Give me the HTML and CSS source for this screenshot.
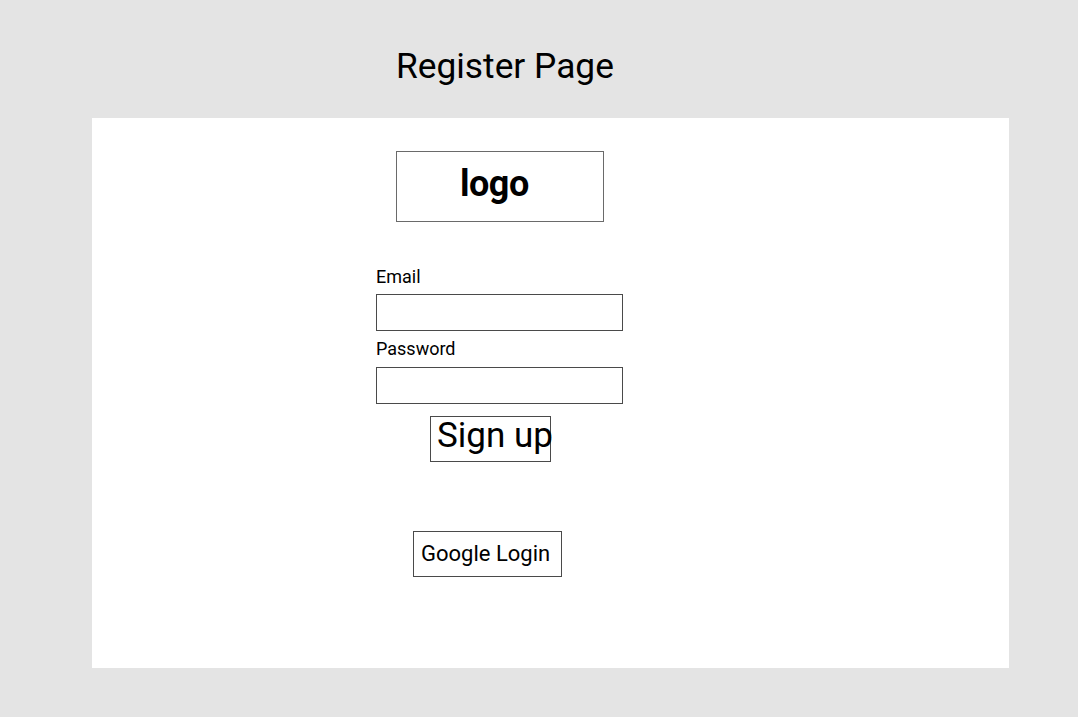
FILE: index.html
```html
<!DOCTYPE html>
<html>
<head>
<meta charset="utf-8">
<link rel="stylesheet" href="styles.css">
</head>
<body>
<div class="page">
  <h1 class="title">Register Page</h1>
  <div class="card">
    <div class="form">
      <div class="logo">logo</div>
      <label class="label label-email">Email</label>
      <div class="input"></div>
      <label class="label label-password">Password</label>
      <div class="input"></div>
      <div class="signup">Sign up</div>
      <div class="google">Google Login</div>
    </div>
  </div>
</div>
</body>
</html>
```

FILE: styles.css
```css
html, body {
  margin: 0;
  padding: 0;
}
body {
  background: #e4e4e4;
  font-family: Roboto, "Liberation Sans", sans-serif;
  color: #000;
  width: 1078px;
  height: 717px;
  overflow: hidden;
}
.page {
  display: flex;
  flex-direction: column;
}
.title {
  margin: 45px 0 0 396px;
  font-size: 35.3px;
  font-weight: 400;
  line-height: 42px;
  height: 42px;
}
.card {
  margin: 31px 0 0 92px;
  width: 917px;
  height: 550px;
  background: #fff;
  box-sizing: border-box;
  padding: 33px 0 0 284px;
}
.form {
  display: flex;
  flex-direction: column;
  align-items: flex-start;
}
.logo {
  margin-left: 20px;
  width: 208px;
  height: 71px;
  box-sizing: border-box;
  border: 1px solid #6a6a6a;
  font-size: 36px;
  font-weight: 700;
  line-height: 42px;
  padding: 11px 0 0 63px;
  letter-spacing: -0.5px;
}
.label {
  font-size: 18px;
  line-height: 21px;
}
.label-email {
  margin-top: 44px;
  margin-bottom: 7px;
}
.label-password {
  margin-top: 7px;
  margin-bottom: 8px;
}
.input {
  width: 247px;
  height: 37px;
  box-sizing: border-box;
  border: 1px solid #4a4a4a;
}
.signup {
  margin: 12px 0 0 54px;
  width: 121px;
  height: 46px;
  box-sizing: border-box;
  border: 1px solid #4a4a4a;
  font-size: 35px;
  line-height: 36px;
  padding: 1px 0 0 6px;
  white-space: nowrap;
  overflow: visible;
}
.google {
  margin: 69px 0 0 37px;
  width: 149px;
  height: 46px;
  box-sizing: border-box;
  border: 1px solid #4a4a4a;
  font-size: 22px;
  line-height: 26px;
  padding: 9px 0 0 7px;
  white-space: nowrap;
}
```
